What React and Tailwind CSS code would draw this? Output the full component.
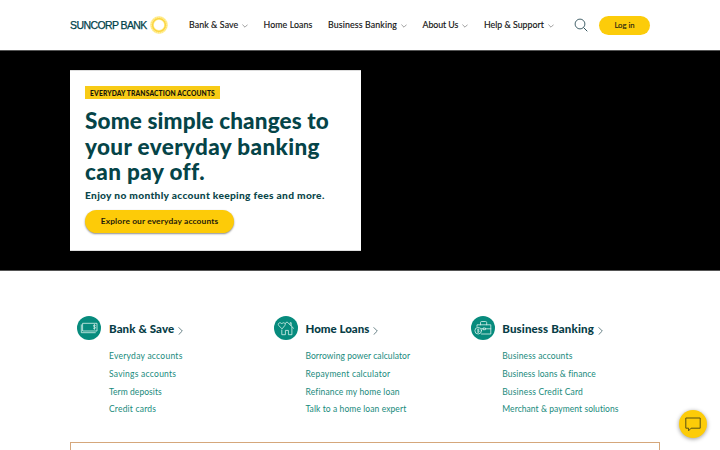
import React from "react";

const navItems = [
  { label: "Bank & Save", menu: true, style: "w-[74.5px] tracking-[0.1px]" },
  { label: "Home Loans", menu: false, style: "w-[64.5px] tracking-[0.1px]" },
  { label: "Business Banking", menu: true, style: "w-[94.5px] tracking-[0.13px]" },
  { label: "About Us", menu: true, style: "w-[61.5px] tracking-[-0.05px]" },
  { label: "Help & Support", menu: true, style: "w-[91px]" },
];

const columns = [
  {
    title: "Bank & Save",
    titleStyle: "tracking-[0.1px]",
    icon: "cash",
    links: [
      { label: "Everyday accounts", style: "tracking-[0.26px]" },
      { label: "Savings accounts", style: "tracking-[0.25px]" },
      { label: "Term deposits", style: "tracking-[0.06px]" },
      { label: "Credit cards", style: "tracking-[0.2px]" },
    ],
  },
  {
    title: "Home Loans",
    titleStyle: "",
    icon: "home",
    links: [
      { label: "Borrowing power calculator", style: "tracking-[0.06px]" },
      { label: "Repayment calculator", style: "tracking-[0.22px]" },
      { label: "Refinance my home loan", style: "tracking-[0.14px]" },
      { label: "Talk to a home loan expert", style: "tracking-[0.09px]" },
    ],
  },
  {
    title: "Business Banking",
    titleStyle: "tracking-[0.13px]",
    icon: "briefcase",
    links: [
      { label: "Business accounts", style: "tracking-[0.14px]" },
      { label: "Business loans & finance", style: "tracking-[0.08px]" },
      { label: "Business Credit Card", style: "tracking-[0.17px]" },
      { label: "Merchant & payment solutions", style: "tracking-[0.06px]" },
    ],
  },
];

const Sun = () => (
  <svg className="ml-[3px] h-[18px] w-[18px]" viewBox="0 0 18 18" fill="none">
    <circle cx="9" cy="9" r="7" stroke="#fff1a8" strokeWidth="3.8" />
    <circle cx="9" cy="9" r="7" stroke="#ffe574" strokeWidth="2.6" strokeDasharray="1.2 0.6" />
    <circle cx="9" cy="9" r="6.4" stroke="#fbd43c" strokeWidth="1.2" />
  </svg>
);

const CategoryIcon = ({ name }) => (
  <svg
    className="h-6 w-6 shrink-0"
    viewBox="0 0 24 24"
    fill="none"
    stroke="#d9f1ec"
    strokeWidth="0.8"
    strokeLinecap="round"
    strokeLinejoin="round"
  >
    <circle cx="12" cy="12" r="12" fill="#078b7d" stroke="none" />
    {name === "cash" && (
      <>
        <path d="M6 7.3h14v7.7H6z" />
        <path d="M4.3 8.8v7.9h14" />
        <path d="M18.4 9.4c-.5-.6-2-.5-2 .5s2.1.8 2.1 1.8-1.6 1.3-2.2.5M17.4 8.6v4.7" />
      </>
    )}
    {name === "home" && (
      <>
        <path d="M11.3 7.4 13 5.9l6.6 6.4M17.2 9.6V6.7h-1.1v1.6" />
        <path d="M7.8 14v4.7h3.6v-4.3h3v4.3h3.5v-7.6" />
        <path d="M7.8 12.6 4.8 9.6c-1.3-1.4.1-3.4 1.9-2.7.5.2.8.6 1.1 1 .3-.4.6-.8 1.1-1 1.8-.7 3.2 1.3 1.9 2.7z" />
      </>
    )}
    {name === "briefcase" && (
      <>
        <path d="M6 10.4V8.8h13.8v9.2H10.5M9.5 8.8V6.6c0-.7.4-1.1 1.1-1.1h4c.7 0 1.1.4 1.1 1.1v2.2" />
        <path d="M10.4 12.8h2m2 0h5.4M12.4 12h2v1.7h-2z" />
        <circle cx="7.2" cy="14.7" r="3.3" />
        <path d="M8.2 13.6c-.5-.6-1.9-.4-1.8.4.1.9 1.8.5 1.8 1.4 0 .9-1.5 1-2 .3M7.2 12.8v3.8" strokeWidth="0.65" />
      </>
    )}
  </svg>
);

const Header = () => (
  <header className="flex h-[50px] items-center pl-[70px]">
    <div className="flex w-[119px] items-center">
      <span className="w-[77px] whitespace-nowrap font-['Liberation_Sans',sans-serif] text-[10.5px] leading-[14px] tracking-[-0.59px] text-[#00424a] [-webkit-text-stroke:0.25px_#00424a]">
        SUNCORP BANK
      </span>
      <Sun />
    </div>

    <nav className="flex">
      {navItems.map((item) => (
        <a
          key={item.label}
          className={`${item.style} flex shrink-0 items-center gap-[4px] whitespace-nowrap text-[8.8px] leading-[14px] text-[#151515] [-webkit-text-stroke:0.15px_#151515]`}
        >
          {item.label}
          {item.menu && (
            <svg className="mt-[2px] h-[4px] w-[6px]" viewBox="0 0 6 4" fill="none">
              <path d="M0.4 0.6 3 3.2 5.6 0.6" stroke="#777" strokeWidth="0.7" />
            </svg>
          )}
        </a>
      ))}
    </nav>

    <svg className="-ml-px h-[14px] w-[14px]" viewBox="0 0 14 14" fill="none" stroke="#31525b">
      <circle cx="6" cy="6" r="4.9" strokeWidth="0.9" />
      <path d="m9.5 9.5 3.8 3.8" strokeWidth="1" />
    </svg>
    <button className="ml-[11px] h-[19px] w-[51px] rounded-full bg-[#fccc0a] pt-px text-[7.7px] text-[#2b2611] [-webkit-text-stroke:0.15px_#2b2611]">
      Log in
    </button>
  </header>
);

const Hero = () => (
  <section className="h-[221px] border-y border-[#555] bg-black pl-[70px] pt-[19px]">
    <div className="h-[181px] w-[291px] border-y border-[#ddd] bg-white pl-[15px] pt-[15px]">
      <div className="flex h-[13px] w-[135px] items-center justify-center whitespace-nowrap bg-[#f8cb16] pt-px text-[6.7px] font-black tracking-[0.14px] text-[#17150a]">
        EVERYDAY TRANSACTION ACCOUNTS
      </div>
      <h1 className="mt-[9px] whitespace-nowrap text-[22.5px] font-black leading-[25.5px] text-[#054448] [font-variant-ligatures:none]">
        <span className="block tracking-[0.14px]">Some simple changes to</span>
        <span className="block tracking-[0.38px]">your everyday banking</span>
        <span className="block tracking-[0.4px]">can pay off.</span>
      </h1>
      <p className="mt-[3px] whitespace-nowrap text-[10.2px] font-black leading-[14px] tracking-[0.31px] text-[#0b474b]">
        Enjoy no monthly account keeping fees and more.
      </p>
      <button className="mt-[8px] flex h-[23px] w-[149px] items-center justify-center whitespace-nowrap rounded-full bg-[#fdcb08] text-[8.4px] font-bold tracking-[0.13px] text-[#1d1a0a] shadow-[0_1px_2px_rgba(0,0,0,0.45)]">
        Explore our everyday accounts
      </button>
    </div>
  </section>
);

export default function App() {
  return (
    <div className="h-[450px] w-[720px] overflow-hidden bg-white font-[Lato,sans-serif]">
      <Header />
      <Hero />

      {/* Product categories */}
      <section className="grid h-[171px] grid-cols-[196.5px_196.8px_190px] pl-[77.4px] pt-[45px]">
        {columns.map((col) => (
          <div key={col.title} className="flex gap-[7.6px]">
            <CategoryIcon name={col.icon} />
            <div className="whitespace-nowrap">
              <h2
                className={`${col.titleStyle} flex h-[24px] items-center gap-[4px] pt-[2px] text-[11.5px] font-black text-[#073d46]`}
              >
                {col.title}
                <svg className="mt-[3px] h-[8px] w-[5px]" viewBox="0 0 5 8" fill="none">
                  <path d="m0.6 0.3 3.7 3.7-3.7 3.7" stroke="#45656b" strokeWidth="0.8" />
                </svg>
              </h2>
              <ul className="mt-[8px] text-[8.5px] leading-[17.8px] text-[#178a7c]">
                {col.links.map((link) => (
                  <li key={link.label} className={link.style}>
                    {link.label}
                  </li>
                ))}
              </ul>
            </div>
          </div>
        ))}
      </section>

      <div className="ml-[70px] h-[20px] w-[590px] border border-[#d5a77b]" />

      {/* Chat button */}
      <button className="fixed bottom-[12px] right-[13px] flex h-[28px] w-[28px] items-center justify-center rounded-full bg-[#fdcc08] shadow-[0_1px_4px_rgba(0,0,0,0.4)]">
        <svg className="h-[15px] w-[16px]" viewBox="0 0 16 15" fill="none">
          <path d="M0.8 1h14.4v10.2H6.1l-2.5 2.6v-2.6H0.8z" stroke="#4f4a15" strokeWidth="0.95" />
        </svg>
      </button>
    </div>
  );
}
